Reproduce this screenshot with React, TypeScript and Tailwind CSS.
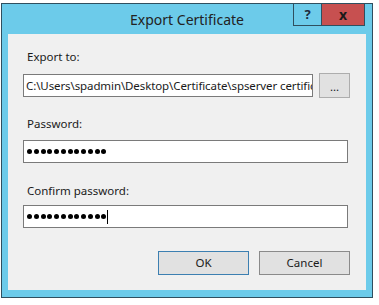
const path = "C:\\Users\\spadmin\\Desktop\\Certificate\\spserver certificate.pfx";

function Dots({ caret }: { caret?: boolean }) {
  return (
    <div className="flex items-center h-full pl-[3px]">
      <div className="flex gap-[1.75px]">
        {Array.from({ length: 12 }).map((_, i) => (
          <div key={i} className="w-[5px] h-[5px] rounded-full bg-black" />
        ))}
      </div>
      {caret && <div className="ml-[1px] w-[1px] h-[14px] bg-black" />}
    </div>
  );
}

export default function App() {
  return (
    <div
      className="w-[379px] h-[305px] bg-white pt-[3px] pl-[1px]"
      style={{ fontFamily: '"Noto Sans", "Open Sans", sans-serif' }}
    >
      <div className="relative w-[372px] h-[295px] border border-[#2f4f5f] bg-[#6ccbea] flex flex-col px-[6px] pb-[7px]">
        <div className="h-[30px] flex items-center justify-center text-[14px] text-[#222]">
          Export Certificate
        </div>

        {/* caption buttons */}
        <div className="absolute top-0 right-[7px] flex">
          <div className="w-[29px] h-[22px] border-x border-b border-[#2f4f5f] flex items-center justify-center text-[13px] font-bold text-[#1c2a3c]">
            ?
          </div>
          <div className="w-[43px] h-[22px] border-r border-b border-[#2f4f5f] bg-[#c75050] flex items-center justify-center text-[14px] font-bold text-[#1a1a1a]">
            x
          </div>
        </div>

        <div className="flex-1 bg-[#f0f0f0] pl-[15px] pt-[15px] text-[11.5px] text-[#1a1a1a]">
          <div className="pl-[4px] h-4 leading-4">Export to:</div>
          <div className="mt-[9px] flex gap-[6px] items-start">
            <div className="w-[290px] h-[23px] border border-[#7a7a7a] bg-white pl-[2px] leading-[21px] overflow-hidden whitespace-nowrap tracking-[-0.1px]">
              {path}
            </div>
            <div className="-mt-[1px] w-[31px] h-[25px] border border-[#adadad] bg-[#e1e1e1] flex items-center justify-center leading-none pt-[3px]">
              ...
            </div>
          </div>

          <div className="mt-[18px] pl-[4px] h-4 leading-4">Password:</div>
          <div className="mt-[8px] w-[325px] h-[23px] border border-[#7a7a7a] bg-white">
            <Dots />
          </div>

          <div className="mt-[20px] pl-[4px] h-4 leading-4">Confirm password:</div>
          <div className="mt-[6px] w-[325px] h-[23px] border border-[#7a7a7a] bg-white">
            <Dots caret />
          </div>

          <div className="mt-[23px] flex gap-[10px] pl-[135px]">
            <div className="w-[91px] h-[24px] border border-[#3c7fb1] bg-[#e1e1e1] flex items-center justify-center">
              OK
            </div>
            <div className="w-[91px] h-[24px] border border-[#8a8a8a] bg-[#e1e1e1] flex items-center justify-center">
              Cancel
            </div>
          </div>
        </div>
      </div>
    </div>
  );
}
